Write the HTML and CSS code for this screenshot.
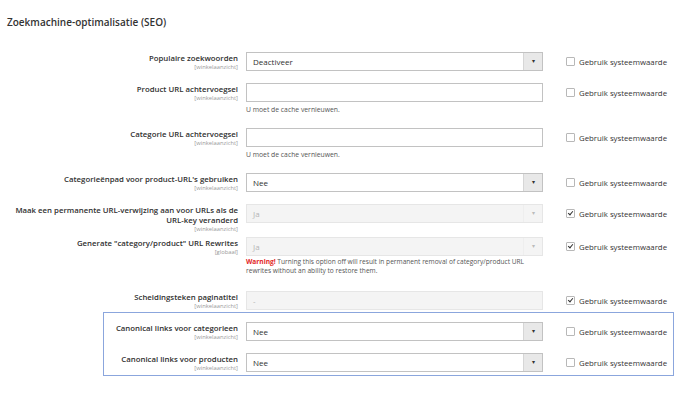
FILE: index.html
```html
<!DOCTYPE html>
<html lang="nl">
<head>
    <meta charset="UTF-8">
    <meta name="viewport" content="width=device-width, initial-scale=1.0">
    <title>Zoekmachine-optimalisatie (SEO)</title>
    <link rel="stylesheet" href="styles.css">
</head>
<body>
    <div class="section">
        <h2 class="section-title">Zoekmachine-optimalisatie (SEO)</h2>

        <div class="row">
            <div class="label">Populaire zoekwoorden<span class="scope">[winkelaanzicht]</span></div>
            <div class="control">
                <div class="select"><span class="value">Deactiveer</span><span class="arrow">&#9662;</span></div>
            </div>
            <div class="inherit"><span class="check"></span>Gebruik systeemwaarde</div>
        </div>

        <div class="row">
            <div class="label">Product URL achtervoegsel<span class="scope">[winkelaanzicht]</span></div>
            <div class="control">
                <div class="input"></div>
                <p class="note">U moet de cache vernieuwen.</p>
            </div>
            <div class="inherit"><span class="check"></span>Gebruik systeemwaarde</div>
        </div>

        <div class="row">
            <div class="label">Categorie URL achtervoegsel<span class="scope">[winkelaanzicht]</span></div>
            <div class="control">
                <div class="input"></div>
                <p class="note">U moet de cache vernieuwen.</p>
            </div>
            <div class="inherit"><span class="check"></span>Gebruik systeemwaarde</div>
        </div>

        <div class="row">
            <div class="label">Categorieënpad voor product-URL's gebruiken<span class="scope">[winkelaanzicht]</span></div>
            <div class="control">
                <div class="select"><span class="value">Nee</span><span class="arrow">&#9662;</span></div>
            </div>
            <div class="inherit"><span class="check"></span>Gebruik systeemwaarde</div>
        </div>

        <div class="row row-compact">
            <div class="label">Maak een permanente URL-verwijzing aan voor URLs als de URL-key veranderd<span class="scope">[winkelaanzicht]</span></div>
            <div class="control">
                <div class="select disabled"><span class="value">Ja</span><span class="arrow">&#9662;</span></div>
            </div>
            <div class="inherit"><span class="check checked"></span>Gebruik systeemwaarde</div>
        </div>

        <div class="row">
            <div class="label">Generate "category/product" URL Rewrites<span class="scope">[globaal]</span></div>
            <div class="control">
                <div class="select disabled"><span class="value">Ja</span><span class="arrow">&#9662;</span></div>
                <p class="note warning"><strong>Warning!</strong> Turning this option off will result in permanent removal of category/product URL rewrites without an ability to restore them.</p>
            </div>
            <div class="inherit"><span class="check checked"></span>Gebruik systeemwaarde</div>
        </div>

        <div class="row">
            <div class="label">Scheidingsteken paginatitel<span class="scope">[winkelaanzicht]</span></div>
            <div class="control">
                <div class="input disabled"><span class="value">-</span></div>
            </div>
            <div class="inherit"><span class="check checked"></span>Gebruik systeemwaarde</div>
        </div>

        <!-- highlighted group -->
        <div class="highlight">
            <div class="row">
                <div class="label">Canonical links voor categorieen<span class="scope">[winkelaanzicht]</span></div>
                <div class="control">
                    <div class="select"><span class="value">Nee</span><span class="arrow">&#9662;</span></div>
                </div>
                <div class="inherit"><span class="check"></span>Gebruik systeemwaarde</div>
            </div>

            <div class="row">
                <div class="label">Canonical links voor producten<span class="scope">[winkelaanzicht]</span></div>
                <div class="control">
                    <div class="select"><span class="value">Nee</span><span class="arrow">&#9662;</span></div>
                </div>
                <div class="inherit"><span class="check"></span>Gebruik systeemwaarde</div>
            </div>
        </div>
    </div>
</body>
</html>
```

FILE: styles.css
```css
body {
    margin: 0;
    background: #fff;
    font-family: "Open Sans", "Liberation Sans", sans-serif;
    color: #303030;
}

.section {
    padding: 14px 0 0 7px;
}

.section-title {
    margin: 0 0 22px;
    font-size: 10px;
    font-weight: 600;
    line-height: 16px;
    color: #333;
}

/* one settings row: label | field | use default */
.row {
    display: grid;
    grid-template-columns: 231px 297px auto;
    column-gap: 8px;
    margin-bottom: 12px;
}

.row-compact {
    margin-bottom: 4px;
}

.label {
    padding-top: 1px;
    text-align: right;
    font-size: 7.8px;
    font-weight: 600;
    line-height: 10px;
    color: #303030;
}

.scope {
    display: block;
    font-size: 5.8px;
    font-weight: 400;
    line-height: 8px;
    color: #999;
}

.control {
    min-width: 0;
}

.select,
.input {
    display: flex;
    align-items: center;
    height: 19px;
    box-sizing: border-box;
    border: 1px solid #c2c2c2;
    background: #fff;
    font-size: 8px;
    color: #303030;
}

.value {
    flex: 1;
    padding-left: 6px;
}

.arrow {
    width: 18px;
    height: 100%;
    border-left: 1px solid #d6d6d6;
    background: #e8e8e8;
    font-size: 6px;
    line-height: 17px;
    text-align: center;
    color: #333;
}

.select.disabled,
.input.disabled {
    border-color: #e6e6e6;
    background: #f4f4f4;
    color: #b5b5b5;
}

.select.disabled .arrow {
    border-left-color: #eee;
    background: #f4f4f4;
    color: #bbb;
}

.note {
    margin: 2px 0 0;
    font-size: 6.8px;
    line-height: 12px;
    color: #555;
}

.note.warning {
    margin: 1px 0 4px;
    font-size: 6.6px;
    line-height: 9px;
}

.note.warning strong {
    color: #e22626;
}

.inherit {
    display: flex;
    align-items: center;
    height: 19px;
    padding-left: 15px;
    font-size: 7.8px;
    white-space: nowrap;
    color: #333;
}

.check {
    position: relative;
    width: 9px;
    height: 9px;
    box-sizing: border-box;
    margin-right: 4px;
    border: 1px solid #b8b8b8;
    border-radius: 1px;
    background: #fff;
}

/* tick mark */
.check.checked::after {
    content: "";
    position: absolute;
    left: 2px;
    top: 0px;
    width: 2px;
    height: 4px;
    border-right: 1.5px solid #333;
    border-bottom: 1.5px solid #333;
    transform: rotate(40deg);
}

.highlight {
    width: 571px;
    box-sizing: border-box;
    margin: -10px 0 0 96px;
    padding: 9px 0 3px;
    border: 1px solid #8ba6dd;
}

.highlight .row {
    grid-template-columns: 134px 297px auto;
}

.highlight .row:last-child {
    margin-bottom: 0;
}
```
